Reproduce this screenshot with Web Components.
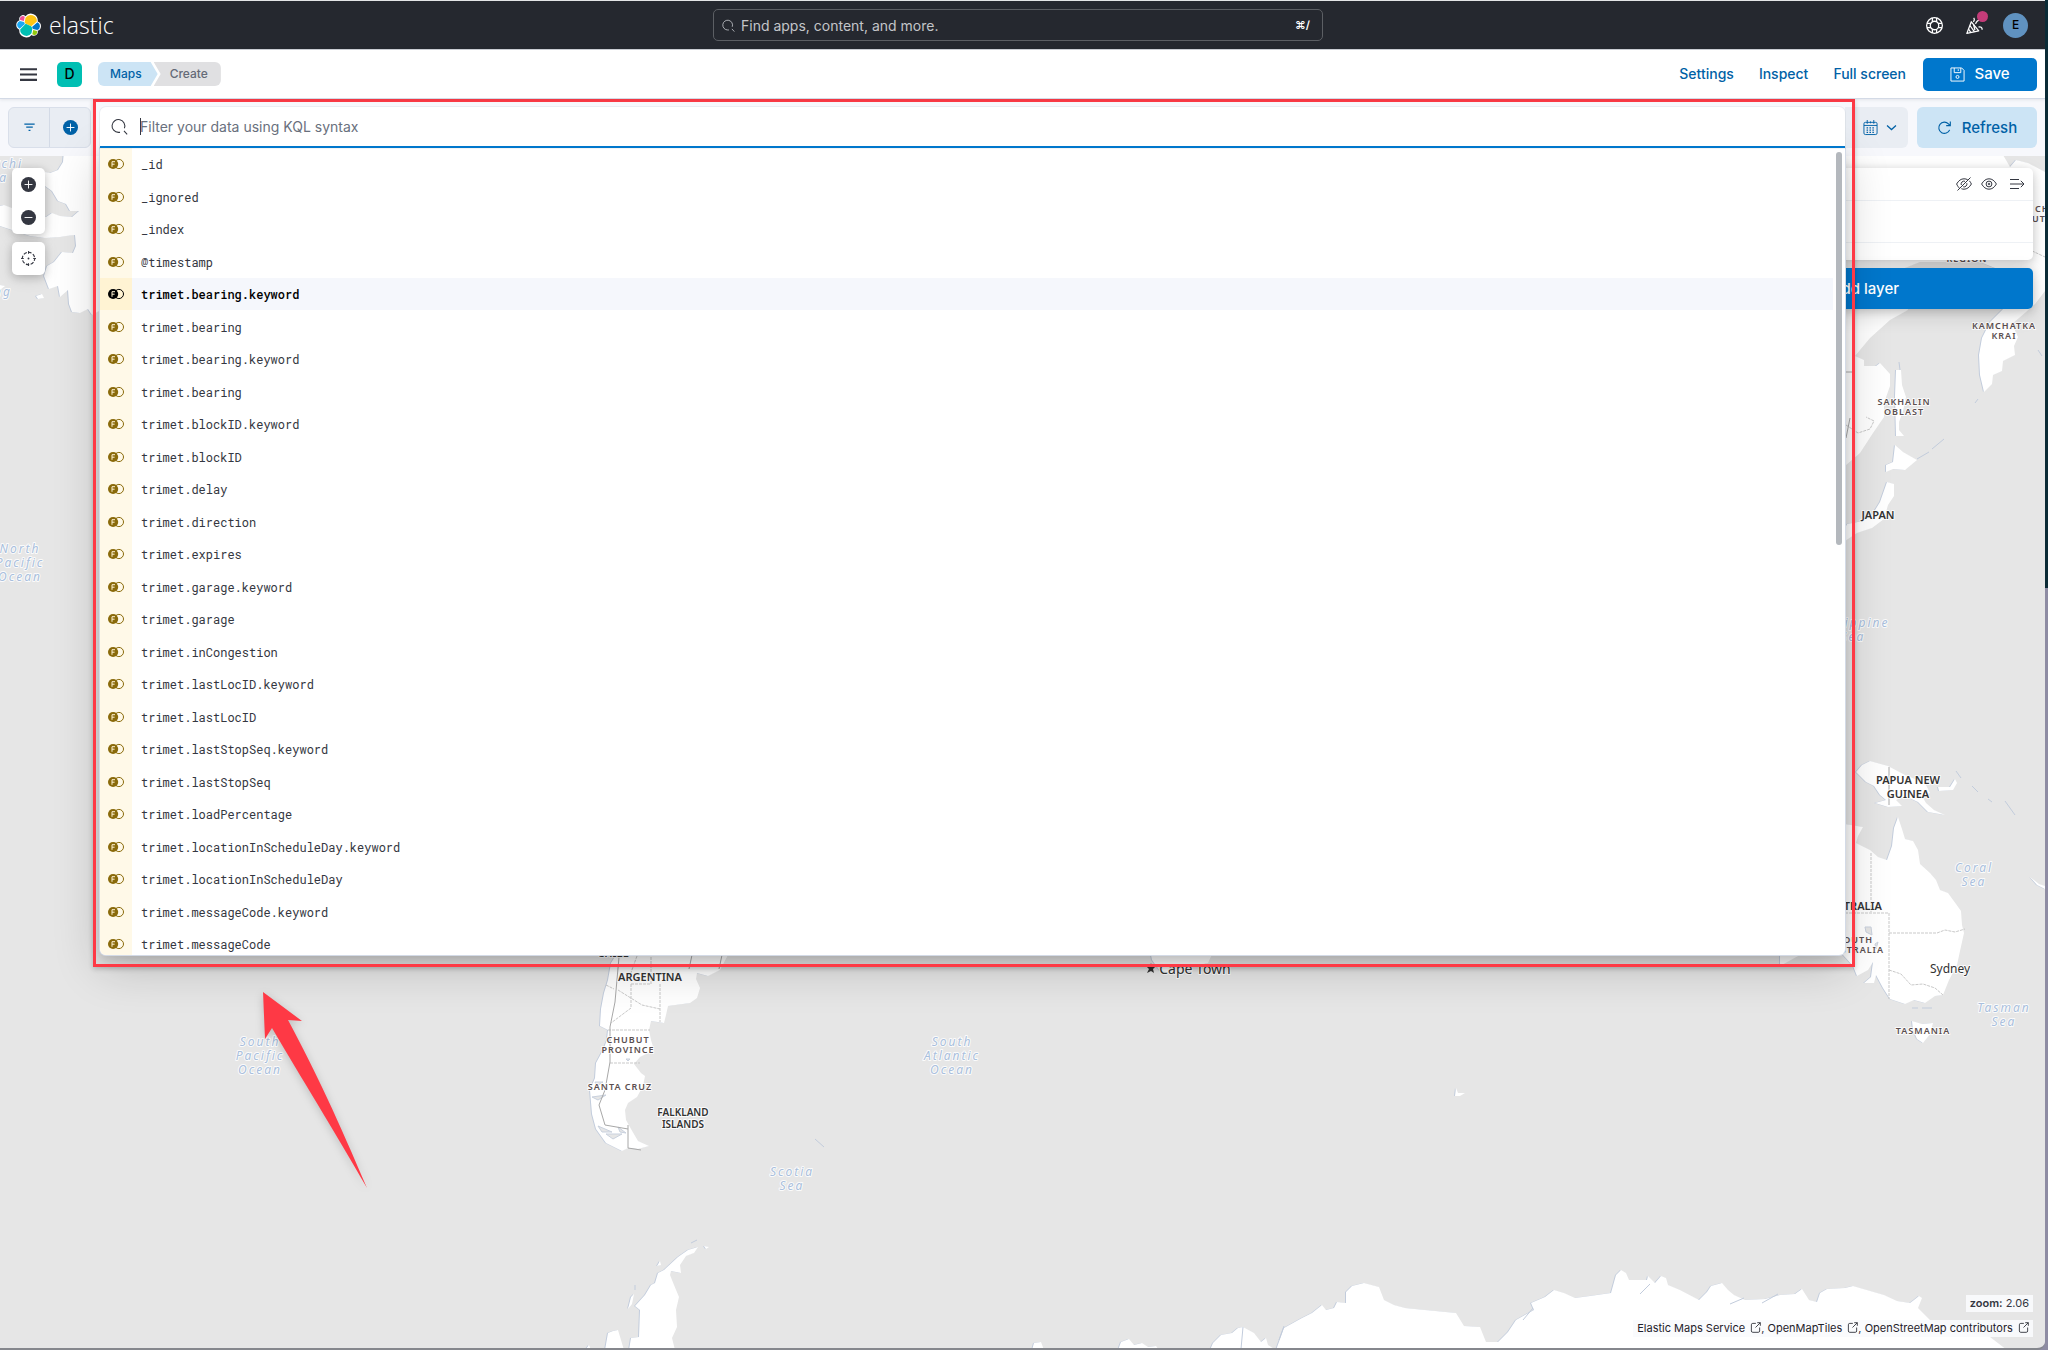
<!DOCTYPE html>
<html lang="en">
<head>
<meta charset="utf-8">
<title>Maps - Elastic</title>
<style>
  html, body { margin: 0; height: 100%; }
  body {
    font-family: Inter, "Liberation Sans", sans-serif;
    font-size: 14px;
    color: #343741;
    background: #e6e6e6;
    overflow: hidden;
    --primary: #0077cc;
    --link: #0061a6;
    --ink: #343741;
    --subdued: #69707d;
    --mark: #fe3945;
  }
</style>
</head>
<body>
<maps-app></maps-app>
<script>
const ICONS = {
  search: '<path fill="none" stroke="currentColor" d="M8.5 13.5H7A6 6 0 1 1 12.6 9.6M12.2 12.2l3 3.3"/>',
  help: '<g fill="none" stroke="currentColor" stroke-width="1.2"><circle cx="8" cy="8" r="7.4"/><circle cx="8" cy="8" r="4"/><path d="M6 .9v3.600M10 .9v3.600M6 11.500v3.600M10 11.500v3.600M.9 6h3.600M.9 10h3.600M11.500 6h3.600M11.500 10h3.600"/></g>',
  cheer: '<g fill="none" stroke="currentColor" stroke-width="1.2" stroke-linejoin="round"><path d="M5 4.5 .8 15.400 12 13z"/><path d="M3.7 8 8 14M2.4 11.4 4.6 14.6M7 6.600l1.400 5.800"/><path d="M6.800 4.400C8 3.600 8.200 2 7.200.8M9 6.500c.6-2 2-3.500 4-3.600M11.800 9.600c1.800-.8 3.600.2 3.400 2.400"/></g>',
  menu: '<path stroke="currentColor" stroke-width="2" d="M0 3h16M0 8h16M0 13h16"/>',
  save: '<g fill="none" stroke="currentColor"><path d="M1 1h11.4L15 3.6V15H1z"/><path d="M4.5 1v5h7V1M8.8 2.4v1.8"/><circle cx="8" cy="10.6" r="1.6"/></g>',
  filter: '<path stroke="currentColor" stroke-width="1.3" d="M2.5 4.5h11M4.5 7.6h7M7 11h2"/>',
  plus: '<circle cx="8" cy="8" r="8" fill="currentColor"/><path stroke="#fff" d="M8 3.8v8.4M3.8 8h8.4"/>',
  minus: '<circle cx="8" cy="8" r="8" fill="currentColor"/><path stroke="#fff" d="M3.8 8h8.4"/>',
  target: '<circle cx="8" cy="8" r="6.6" fill="none" stroke="currentColor" stroke-width="1.2" stroke-dasharray="2.6 1.55 3.6 1.55 1.07 0"/><path stroke="currentColor" d="M8 0v3M8 13v3M0 8h3M13 8h3"/><circle cx="8" cy="8" r="1" fill="currentColor"/>',
  calendar: '<g fill="none" stroke="currentColor"><rect x="1" y="2.5" width="14" height="13" rx="1.5"/><path d="M1 5.8h14M4.5 0v4M11.5 0v4M8 1.5v2"/><path stroke-width="1.4" stroke-dasharray="1.6 1.5" d="M3.8 8.4h9M3.8 10.8h9M3.8 13.2h9"/></g>',
  down: '<path fill="none" stroke="currentColor" stroke-width="1.8" d="M1.500 5l6.500 6 6.500-6"/>',
  refresh: '<path fill="none" stroke="currentColor" stroke-width="1.200" d="M13.5 10.5A6 6 0 1 1 12.2 4.1L14 6M14.2 1.5V6H9.8"/>',
  eye: '<g fill="none" stroke="currentColor"><path d="M.6 8C2.6 4.6 5 2.8 8 2.8s5.400 1.800 7.400 5.200C13.400 11.400 11 13.200 8 13.200S2.600 11.400.6 8z"/><circle cx="8" cy="8" r="2.900"/><circle cx="8" cy="8" r=".8"/></g>',
  eyeClosed: '<g fill="none" stroke="currentColor"><path d="M3.300 12C2.300 11.200 1.400 9.600.6 8c2-3.400 4.400-5.200 7.400-5.200 1.400 0 2.600.3 3.700.9M13.400 4.800c.8.9 1.400 2 2 3.200-2 3.400-4.400 5.200-7.400 5.200-.9 0-1.800-.2-2.600-.5M5.300 9A2.900 2.900 0 0 1 9 5.300M10.800 7.200A2.900 2.900 0 0 1 7.200 10.800M1.500 14.500l13-13"/></g>',
  menuRight: '<path fill="none" stroke="currentColor" d="M1 3.500h9M1 8h14M1 12.500h9M11.800 4.800 15 8l-3.200 3.200"/>',
  popout: '<path fill="none" stroke="currentColor" stroke-width="1.200" d="M8.500 2H4a2 2 0 0 0-2 2v9a2 2 0 0 0 2 2h8a2 2 0 0 0 2-2V8M10.500 1H15v4.500M15 1 8 8"/>',
  field: '<circle cx="10.900" cy="8" r="4.600" fill="none" stroke="currentColor"/><circle cx="5.100" cy="8" r="5.100" fill="currentColor"/><path fill="none" stroke="#fff3d3" d="M4 10.800V5.700h3M4 8.200h2.600"/>'
};

const define = (name, html, setup) => customElements.define(name, class extends HTMLElement {
  connectedCallback() {
    if (this.shadowRoot) return;
    const root = this.attachShadow({ mode: 'open' });
    root.innerHTML = typeof html === 'function' ? html(this) : html;
    if (setup) setup(root, this);
  }
});

define('ui-icon', el => `
  <style>:host{display:inline-flex;flex:none;width:var(--icon,16px);height:var(--icon,16px)}svg{width:100%;height:100%;overflow:visible}</style>
  <svg viewBox="0 0 16 16" aria-hidden="true">${ICONS[el.getAttribute('name')]}</svg>`);

define('elastic-logo', `
  <style>
    :host{display:flex;align-items:center;gap:8px;color:#fff}
    svg{width:25px;height:25px}
    span{font:300 23px/24px "Open Sans","Noto Sans",sans-serif}
  </style>
  <svg viewBox="0 0 32 32" aria-hidden="true">
    <path fill="#fff" d="M32 16.800a6.300 6.300 0 0 0-4.200-5.900A9 9 0 0 0 12.100 4 4.800 4.800 0 0 0 4.500 9.400 6.400 6.400 0 0 0 4.200 21.300 9 9 0 0 0 20 28a4.800 4.800 0 0 0 7.600-5.300A6.300 6.300 0 0 0 32 16.800z"/>
    <path fill="#fec514" d="m12.600 13.800 7 3.200 7.100-6.200A7.900 7.900 0 0 0 12.200 6.100L11 12.200z"/>
    <path fill="#00bfb3" d="M5.300 21.200a8 8 0 0 0 14.500 4.700L21 19.800l-1.600-3-7-3.200z"/>
    <path fill="#f04e98" d="m5.300 9.100 4.800 1.100 1.100-5.500a3.800 3.800 0 0 0-5.900 4.400z"/>
    <path fill="#1ba9f5" d="M4.900 10.200a5.300 5.300 0 0 0-.2 9.900l6.700-6.100-1.200-2.600z"/>
    <path fill="#93c90e" d="M20.900 27.300a3.800 3.800 0 0 0 5.900-4.400l-4.800-1.100z"/>
    <path fill="#07c" d="m21.900 20.600 5.300 1.200a5.300 5.300 0 0 0 .2-9.900l-6.900 6z"/>
  </svg>
  <span>elastic</span>`);

define('global-header', `
  <style>
    :host{display:grid;grid-template-columns:1fr 610px 1fr;align-items:center;height:48px;padding:0 25px 0 16px;
      background:#25282f;border-top:1px solid #e3e5e6;color:#fff;box-sizing:content-box}
    label{display:flex;align-items:center;gap:6px;height:32px;padding:0 12px 0 8px;box-sizing:border-box;
      border:1px solid #5c5f64;border-radius:5px;color:#c7cacf;--icon:13px}
    input{flex:1;min-width:0;border:0;padding:0;background:none;outline:0;font:inherit;color:inherit;font-size:14px}
    input::placeholder{color:#c3c5c9;opacity:1}
    kbd{font:600 11px/16px Inter,"DejaVu Sans",sans-serif;color:#fff}
    nav{display:flex;justify-content:flex-end;align-items:center;gap:12px;margin-right:-8px;--icon:17px}
    button{position:relative;display:flex;align-items:center;justify-content:center;width:28px;height:28px;padding:0;border:0;background:none;color:#fff}
    i{position:absolute;top:0;right:0;width:11px;height:11px;border-radius:50%;background:#c43c79}
    .avatar{width:25px;height:25px;margin-left:3px;border-radius:50%;background:#6092c0;color:#000;font:500 12px/24px Inter,sans-serif}
  </style>
  <elastic-logo></elastic-logo>
  <label><ui-icon name="search"></ui-icon><input aria-label="Find apps, content, and more." placeholder="Find apps, content, and more."><kbd>⌘/</kbd></label>
  <nav>
    <button aria-label="Help"><ui-icon name="help"></ui-icon></button>
    <button aria-label="News"><ui-icon name="cheer"></ui-icon><i></i></button>
    <button class="avatar" aria-label="Account">E</button>
  </nav>`);

define('page-header', `
  <style>
    :host{position:relative;z-index:3;display:flex;align-items:center;height:48px;padding:0 8px 0 20px;background:#fff;border-top:1px solid #c9ccd2;border-bottom:1px solid #d3dae6;
      box-shadow:0 1px 3px rgba(50,55,70,.1)}
    button,a{font:500 14px/20px Inter,sans-serif}
    .menu{display:flex;padding:0;border:0;background:none;color:#343741;--icon:17px}
    .space{width:25px;height:25px;margin:0 16px 0 20px;padding:0;border:0;border-radius:5px;background:#00bfb3;color:#000}
    ol{display:flex;flex:1;margin:0;padding:0;list-style:none}
    .crumb{display:block;height:24px;font-size:12px;line-height:24px;font-weight:500;text-decoration:none}
    a.crumb{padding:0 16px 0 12px;background:#cce4f5;color:#0061a6;border-radius:6px 0 0 6px;clip-path:polygon(0 0,calc(100% - 7px) 0,100% 50%,calc(100% - 7px) 100%,0 100%)}
    span.crumb{margin-left:-4px;padding:0 13px 0 16px;background:#e0e0e2;color:#646a77;border-radius:0 6px 6px 0;clip-path:polygon(0 0,100% 0,100% 100%,0 100%,7px 50%)}
    nav{display:flex;align-items:center;gap:25px}
    .link{padding:0;border:0;background:none;color:var(--link)}
    .save{display:flex;align-items:center;justify-content:center;gap:9px;width:114px;height:33px;margin-left:-8px;border:0;border-radius:5px;background:var(--primary);color:#fff;--icon:15px;font-size:15px}
  </style>
  <button class="menu" aria-label="Menu"><ui-icon name="menu"></ui-icon></button>
  <button class="space">D</button>
  <ol><li><a class="crumb" href="#">Maps</a></li><li><span class="crumb">Create</span></li></ol>
  <nav>
    <button class="link">Settings</button><button class="link">Inspect</button><button class="link">Full screen</button>
    <button class="save"><ui-icon name="save"></ui-icon>Save</button>
  </nav>`);

define('field-option', `
  <style>
    :host{display:flex;flex:none;height:32px;align-items:stretch;font:12px/16px "Roboto Mono","DejaVu Sans Mono",monospace;color:#343741}
    :host(:nth-child(even)){height:33px}
    .type{display:flex;align-items:center;justify-content:center;width:32px;background:#fff9e8;color:#8a6a0a}
    .name{display:flex;flex:1;align-items:center;padding-left:9px;margin-right:12px}
    :host([active]){font-weight:500;color:#000}
    :host([active]) .type{background:#fff3d3;color:#000}
    :host([active]) .name{background:#f5f7fc}
  </style>
  <span class="type"><ui-icon name="field"></ui-icon></span>
  <span class="name"><slot></slot></span>`);

define('suggestion-list', `
  <style>
    :host{position:absolute;left:0;right:0;top:100%;height:807px;overflow:hidden;display:flex;flex-direction:column;
      background:#fff;border-radius:0 0 6px 6px;box-shadow:0 0 0 1px #d3dae6,0 6px 12px rgba(0,0,0,.14),0 12px 48px rgba(0,0,0,.2)}
    i{position:absolute;right:3px;top:4px;width:6px;height:393px;border-radius:3px;background:#b4b8bd}
  </style>
  <slot></slot>`, root => {
  const thumb = document.createElement('i');
  root.append(thumb);
});

const FIELDS = ['_id', '_ignored', '_index', '@timestamp', 'trimet.bearing.keyword', 'trimet.bearing', 'trimet.bearing.keyword',
  'trimet.bearing', 'trimet.blockID.keyword', 'trimet.blockID', 'trimet.delay', 'trimet.direction', 'trimet.expires',
  'trimet.garage.keyword', 'trimet.garage', 'trimet.inCongestion', 'trimet.lastLocID.keyword', 'trimet.lastLocID',
  'trimet.lastStopSeq.keyword', 'trimet.lastStopSeq', 'trimet.loadPercentage', 'trimet.locationInScheduleDay.keyword',
  'trimet.locationInScheduleDay', 'trimet.messageCode.keyword', 'trimet.messageCode'];

define('query-input', `
  <style>
    :host{position:relative;flex:1;display:block}
    label{position:relative;z-index:1;display:flex;align-items:center;gap:12px;height:41px;padding:0 12px 0 11px;box-sizing:border-box;background:#fff;
      border-radius:6px 6px 0 0;border-bottom:2px solid var(--primary);box-shadow:0 0 0 1px rgba(50,60,80,.06);color:#343741;--icon:17px}
    input{flex:1;min-width:0;height:20px;padding:0;border:0;outline:0;font:14px/20px Inter,sans-serif;
      background:linear-gradient(#343741,#343741) 0 50%/1px 17px no-repeat}
    input::placeholder{color:#69707d;opacity:1}
    .frame{position:absolute;z-index:2;left:-7px;top:-8px;right:-10px;height:862px;border:3px solid var(--mark);box-shadow:0 2px 5px rgba(0,0,0,.2);pointer-events:none}
    .arrow{position:absolute;z-index:2;left:163px;top:885px;width:105px;height:197px;overflow:visible;filter:drop-shadow(0 2px 4px rgba(0,0,0,.18))}
  </style>
  <label><ui-icon name="search"></ui-icon><input aria-label="Query" placeholder="Filter your data using KQL syntax"></label>
  <suggestion-list>${FIELDS.map((f, i) => `<field-option${i === 4 ? ' active' : ''}>${f}</field-option>`).join('')}</suggestion-list>
  <div class="frame"></div>
  <svg class="arrow" viewBox="0 0 105 197" aria-hidden="true"><path fill="#fe3945" d="M0 0 39 29 25 28C54 82 75 128 104 196 68 133 40 89 9 36L2 47z"/></svg>`);

define('query-bar', `
  <style>
    :host{position:relative;z-index:2;display:flex;height:41px;padding:8px;background:#f7f8fc}
    button{display:flex;align-items:center;justify-content:center;height:41px;padding:0;border:0;background:none;color:var(--link)}
    .filters{display:flex;width:81px;height:39px;margin-right:9px;border:1px solid #d9dfea;border-radius:6px;background:#e9edf3}
    .filters button{flex:1;height:39px;--icon:15px}
    .filters button+button{border-left:1px solid #d3dae6}
    .date{gap:8px;width:63px;padding-left:6px;box-sizing:border-box;margin-right:9px;background:#e9edf3;border-radius:0 6px 6px 0;--icon:15px}
    .date ui-icon+ui-icon{--icon:11px}
    .refresh{gap:10px;width:120px;border-radius:6px;background:#cce4f5;font:500 15px/20px Inter,sans-serif;--icon:15px}
  </style>
  <div class="filters"><button aria-label="Filters"><ui-icon name="filter"></ui-icon></button><button aria-label="Add filter"><ui-icon name="plus"></ui-icon></button></div>
  <query-input></query-input>
  <button class="date" aria-label="Date"><ui-icon name="calendar"></ui-icon><ui-icon name="down"></ui-icon></button>
  <button class="refresh"><ui-icon name="refresh"></ui-icon>Refresh</button>`);

define('map-controls', `
  <style>
    :host{display:flex;flex-direction:column;gap:8px;width:33px;color:#343741}
    div{display:flex;flex-direction:column;border-radius:5px;background:#fff;box-shadow:0 2px 8px rgba(0,0,0,.18),0 4px 16px rgba(0,0,0,.1)}
    button{display:flex;align-items:center;justify-content:center;width:33px;height:33px;padding:0;border:0;background:none;color:inherit;--icon:15px}
  </style>
  <div><button aria-label="Zoom in"><ui-icon name="plus"></ui-icon></button><button aria-label="Zoom out"><ui-icon name="minus"></ui-icon></button></div>
  <div><button aria-label="Fit to data"><ui-icon name="target"></ui-icon></button></div>`);

define('layer-panel', `
  <style>
    :host{display:flex;flex-direction:column;gap:8px;width:336px}
    section{border-radius:5px;background:#fff;box-shadow:0 2px 8px rgba(0,0,0,.16),0 6px 20px rgba(0,0,0,.12)}
    header{display:flex;justify-content:flex-end;align-items:center;gap:2px;height:32px;padding-right:5px;border-bottom:1px solid #eef1f5}
    header button{display:flex;align-items:center;justify-content:center;width:23px;height:24px;padding:0;border:0;background:none;color:#343741}
    header button:last-child{margin-left:3px}
    p{height:41px;margin:0;border-bottom:1px solid #eef1f5}
    footer{height:17px}
    .add{height:41px;border:0;border-radius:5px;background:var(--primary);color:#fff;font:500 15px/20px Inter,sans-serif;box-shadow:0 2px 8px rgba(0,0,0,.16),0 6px 20px rgba(0,0,0,.14)}
  </style>
  <section><header><button aria-label="Hide all"><ui-icon name="eyeClosed"></ui-icon></button><button aria-label="Show all"><ui-icon name="eye"></ui-icon></button><button aria-label="Collapse"><ui-icon name="menuRight"></ui-icon></button></header><p></p><footer></footer></section>
  <button class="add">Add layer</button>`);

define('map-attribution', `
  <style>
    :host{display:flex;flex-direction:column;align-items:flex-end;gap:8px;font:11px/17px Inter,sans-serif;color:#343741;--icon:11px}
    div{padding:0 4px;background:rgba(250,251,253,.9);white-space:nowrap}
    b{font-weight:600}
    a{color:#1f222b;text-decoration:none}
    ui-icon{margin-left:2px;vertical-align:-1px}
  </style>
  <div><b>zoom:</b> <span>2.06</span></div>
  <div><a href="#">Elastic Maps Service <ui-icon name="popout"></ui-icon></a>, <a href="#">OpenMapTiles <ui-icon name="popout"></ui-icon></a>, <a href="#">OpenStreetMap contributors <ui-icon name="popout"></ui-icon></a></div>`);

/* class, anchor x, first baseline, line height, lines */
const LABELS = [
  ['sea end', 23, 168, 14, 'Chukchi'], ['sea end', 8, 182, 14, 'Sea'], ['sea end', 12, 296, 14, 'Bering'],
  ['sea', 20, 553, 14, 'North|Pacific|Ocean'], ['sea', 260, 1046, 14, 'South|Pacific|Ocean'],
  ['sea', 952, 1046, 14, 'South|Atlantic|Ocean'], ['sea', 792, 1176, 14, 'Scotia|Sea'],
  ['sea', 1974, 872, 14, 'Coral|Sea'], ['sea', 2004, 1012, 14, 'Tasman|Sea'],
  ['sea', 1853, 627, 14, 'Philippine|Sea'],
  ['country', 613, 957, 13, 'CHILE'], ['country', 650, 981, 13, 'ARGENTINA'],
  ['state', 628, 1043, 10, 'CHUBUT|PROVINCE'], ['state', 620, 1090, 10, 'SANTA CRUZ'],
  ['isle', 683, 1116, 12, 'FALKLAND|ISLANDS'],
  ['city', 1195, 974, 13, 'Cape Town'], ['town', 1950, 973, 13, 'Sydney'],
  ['state', 2004, 329, 10, 'KAMCHATKA|KRAI'], ['state', 1904, 405, 10, 'SAKHALIN|OBLAST'],
  ['state', 1967, 262, 10, 'REGION'], ['state start', 2035, 212, 10, 'CHUKOTKA'], ['state start', 2032, 222, 10, 'UTONOMOUS'],
  ['country', 1878, 519, 13, 'JAPAN'], ['country', 1908, 784, 14, 'PAPUA NEW|GUINEA'],
  ['country end', 1882, 910, 13, 'AUSTRALIA'], ['state end', 1873, 943, 10, 'SOUTH'], ['state end', 1884, 953, 10, 'AUSTRALIA'],
  ['state', 1923, 1034, 10, 'TASMANIA']
];

define('world-map', () => `
  <style>
    :host{display:block;width:100%;height:100%}
    svg{display:block;width:100%;height:100%}
    text{font:12px "Noto Sans",sans-serif;text-anchor:middle;fill:#333;stroke:#fff;stroke-width:2px;stroke-opacity:.85;stroke-linejoin:round;paint-order:stroke}
    .sea{font-style:italic;fill:#a9bfdd;letter-spacing:2px}
    .country{font-weight:600;font-size:11px}
    .isle{font-weight:600;font-size:10px}
    .state{font-weight:600;font-size:9px;letter-spacing:1px;fill:#5b4f50}
    .city{font-size:14px}
    .end{text-anchor:end}.start{text-anchor:start}
    .land{fill:#fff;filter:drop-shadow(-1px 0 0 #c2ccdc)}
    .water{fill:#e6e6e6;stroke:#c9d1de}
    .border{fill:none;stroke:#c9c9c9;stroke-dasharray:3 1}
    .nation{fill:none;stroke:#a8a8a8}
    .coast{fill:none;stroke:#c2ccdc}
  </style>
  <svg viewBox="0 156 2045 1192" preserveAspectRatio="xMinYMin slice" role="img" aria-label="World map">
    <rect x="0" y="150" width="2045" height="1250" fill="#e6e6e6"/>
    <g class="land">
      <path d="M64 150 63 162 58 170 50 173 45 172 40 180 45 186 52 191 58 201 66 204 70 211 79 211 72 217 60 216 52 213 46 217 30 215 12 208 4 205 0 206V226L12 230 30 236 45 238 60 237 66 236 75 235 76 246 73 253 62 252 54 262 47 266 44 276 49 289 58 286 60 297 68 290 69 304 72 312 80 313 88 309 92 315 99 311V150zM36 296l6-2 2 4-6 1zM0 285l5 1-5 4z"/>
      <path d="M1750 150H2000L2006 160 2010 167 2016 160 2028 163 2045 172V291L2035 304 2026 312 2012 324 2018 337 2014 346 2015 355 2003 361 2002 371 1993 375 1992 384 1984 392 1980 375 1979 355 1982 338 1990 322 2003 309 2000 268H1995L1980 262H1920L1900 270 1908 310 1890 320 1870 338 1855 356 1864 360 1864 366 1876 366 1880 363 1890 374 1890 386 1884 403 1884 417 1873 433 1860 453 1845 466H1750z"/>
      <path d="M1896 370h5l1 15 4 12-3 14-4 11 0 8 5 6h-8l-1-40zM1895 445l8 7 14 8-6 5-6 5-12-1-7 3 0-7 7-3zM1887 482l7 2 0 12-6 9-4 14-12 9-15 5-12 8-3-6 5-11 16-3 9-6 8-13z"/>
      <path d="M1856 772 1862 765 1870 761 1888 766 1905 775 1925 783 1930 793 1922 796 1926 803 1934 810 1945 815 1928 812 1918 802 1905 796 1896 800 1902 806 1888 807 1875 803 1886 800 1880 795 1874 786 1866 782zM1938 787l12 0 5-8 2 4-4 7-14 1z"/>
      <path d="M1780 824H1845L1863 827 1858 836 1856 843 1870 850 1878 857 1887 860 1892 846 1894 828 1898 817 1902 829 1905 839 1913 841 1918 850 1920 864 1930 873 1936 880 1940 890 1948 893 1956 904 1961 911 1962 925 1964 933 1960 951 1957 965 1949 980 1943 995 1935 996 1925 1003 1914 1000 1905 1004 1890 999 1883 988 1876 975 1874 983 1864 983 1871 977 1873 962 1868 970 1857 976 1853 966 1843 955H1800L1780 966z"/>
      <path d="M1912 1021l10 3 11-1-3 11-7 9-6-4-4-9zM2030 877l9 7 6 2v3l-8-4z"/>
      <path d="M616 955H728L720 970 708 976 697 973 696 979 700 988 697 998 690 1003 668 1006 666 1015 664 1023 651 1021 649 1030 651 1040 654 1050 640 1057 634 1064 641 1073 645 1076 643 1086 637 1097 628 1103 625 1110 626 1120 631 1129 638 1141 649 1146 638 1149 628 1148 622 1151 606 1143 596 1129 592 1114 590 1090 595 1078 596 1063 603 1050 607 1040 608 1030 600 1026 601 1009 604 993 608 980 611 963z"/>
      <path d="M1150 950h64l-6 13-20 4-10 7-18-3-8-11zM1456 1088l2 5 7 0-5 3-5 0z"/>
      <path d="M698 1247 694 1253 686 1256 680 1265 681 1273 671 1271 670 1275 674 1285 679 1297 676 1310 677 1327 672 1338 675 1350H629L631 1338 639 1337 640 1310 635 1306 645 1295 651 1285 655 1283 658 1273 664 1270 678 1257 688 1250zM605 1350 608 1333 613 1331 618 1330 624 1350zM628 1309l3-12 3-3-2 10zM657 1266l3-5 1 4zM704 1246l5 1-3 2zM585 1350l4-5 2 5z"/>
      <path d="M1032 1350l2-7 7-1 3 8zM1118 1350l3-8 8-3 5 6 8-2 6 4 8-1 3 4zM1210 1350 1213 1343 1221 1335 1232 1333 1238 1328 1243 1327 1254 1333 1261 1342 1266 1338 1268 1345 1276 1350 1284 1328 1302 1318 1312 1313 1322 1305 1326 1310 1334 1308 1337 1302 1346 1303V1292L1352 1286 1364 1283 1379 1287 1384 1300 1394 1305 1405 1308 1425 1310 1456 1313 1464 1326 1480 1327 1486 1342 1498 1342 1508 1332 1516 1320 1534 1310 1531 1303 1545 1297 1554 1290 1564 1293 1575 1298 1590 1296 1611 1293 1616 1275 1621 1270 1626 1273 1629 1280 1647 1280 1648 1276 1655 1283 1661 1276 1666 1278 1668 1285 1680 1290 1699 1300 1707 1292 1711 1286 1722 1283 1728 1290 1734 1295 1745 1300 1765 1299 1780 1295 1795 1294 1802 1289 1809 1300 1817 1302 1820 1293 1827 1289 1845 1288 1853 1286 1884 1295 1897 1301 1910 1303 1914 1300 1919 1296 1922 1298 1918 1308 1930 1320 1961 1330 1990 1337 2007 1350z"/>
    </g>
    <g class="water">
      <path d="M1865 927l6 0 1 8-6-3zM626 1059l4 0-2 2zM595 1082h8l-6 4zM592 1097l14-2-8 5zM598 1126l14 6-10 0zM606 1134l16 0-9 5zM618 1127l8 6-6-1zM1875 944l3-2-2 7z"/>
    </g>
    <path class="border" d="M1871 853v60M1845 913h44M1889 913v86M1889 933h48l8-3 10 2 10-3M1889 970l12 4 10 11 12-1 12 4 8 7M608 1030h42M610 1063h30M631 984h20l0-28M631 984v24l-20 15M660 984v38M618 990l24 15 18 4M637 956l-8 22M606 985l8 4M1846 425l12 8 12-4 4-8-8-4M1990 250l20 5 18-6 17 8"/>
    <path class="nation" d="M619 957l-4 45-5 25 0 35-5 28-6 15 6 20 23 4M628 1125v23l13 2M1889 767v38M692 955l-3 14M722 955l-3 14M1846 372h6M1850 418l-4 20"/>
    <path class="coast" d="M1917 459l12-7M1932 449l12-10M1978 399l-3 4M1956 771l5 7M1972 786l6 6M2005 801l10 14M1988 799l4 3M815 1139l9 8M1899 362l1 8M2038 350l4 6M1523 1320l10-12M1640 1294l10-10M1730 1304l14-6M1762 1303l16-9M1284 1326l-5 14M635 1290v-5M697 1240l-6 3M1243 1327l-2 22M1912 1008h6M1922 1008h10"/>
    <path d="M1151 963l1 3h4l-3 3 1 4-3-2-4 2 2-4-3-3h4z" fill="#333"/>
    ${LABELS.map(([cls, x, y, lh, txt]) => `<text class="${cls}" x="${x}" y="${y}">${txt.split('|').map((t, i) => `<tspan x="${x}" dy="${i ? lh : 0}">${t}</tspan>`).join('')}</text>`).join('')}
  </svg>`);

define('maps-app', `
  <style>
    :host{display:grid;grid-template-columns:1fr 3px;height:100vh;background:linear-gradient(#0b2b36 588px,#8e8ca3 588px)}
    main{display:flex;flex-direction:column;min-width:0;border-radius:0 0 8px 0;overflow:hidden;border-bottom:2px solid #85878d}
    .canvas{position:relative;flex:1;min-height:0}
    .overlay{position:absolute;inset:0;display:grid;grid-template-columns:auto auto;justify-content:space-between;align-content:space-between;padding:12px 12px 11px}
    layer-panel,map-attribution{grid-column:2;justify-self:end}
  </style>
  <main>
    <global-header></global-header>
    <page-header></page-header>
    <query-bar></query-bar>
    <div class="canvas">
      <world-map></world-map>
      <div class="overlay"><map-controls></map-controls><layer-panel></layer-panel><map-attribution></map-attribution></div>
    </div>
  </main>`);
</script>
</body>
</html>
